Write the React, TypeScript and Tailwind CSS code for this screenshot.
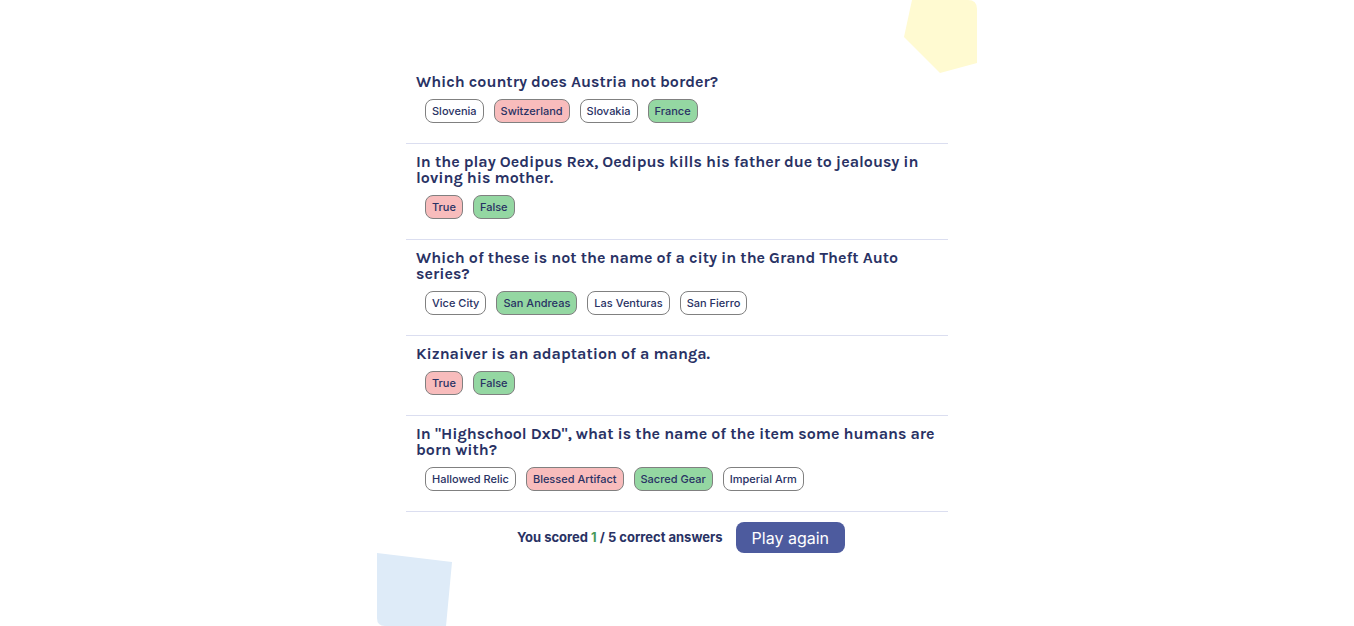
const questions = [
  {
    text: "Which country does Austria not border?",
    answers: ["Slovenia", "Switzerland", "Slovakia", "France"],
    picked: "Switzerland",
    correct: "France",
  },
  {
    text: "In the play Oedipus Rex, Oedipus kills his father due to jealousy in loving his mother.",
    answers: ["True", "False"],
    picked: "True",
    correct: "False",
  },
  {
    text: "Which of these is not the name of a city in the Grand Theft Auto series?",
    answers: ["Vice City", "San Andreas", "Las Venturas", "San Fierro"],
    picked: "San Andreas",
    correct: "San Andreas",
  },
  {
    text: "Kiznaiver is an adaptation of a manga.",
    answers: ["True", "False"],
    picked: "True",
    correct: "False",
  },
  {
    text: 'In "Highschool DxD", what is the name of the item some humans are born with?',
    answers: ["Hallowed Relic", "Blessed Artifact", "Sacred Gear", "Imperial Arm"],
    picked: "Blessed Artifact",
    correct: "Sacred Gear",
  },
];

function answerClass(answer: string, picked: string, correct: string) {
  if (answer === correct) return "bg-[#94d7a2]";
  if (answer === picked) return "bg-[#f8bcbc]";
  return "bg-white";
}

export default function App() {
  return (
    <div className="relative min-h-[626px] overflow-hidden bg-white text-[#293264]">
      <svg className="absolute left-[903px] top-0" width="76" height="75" viewBox="0 0 76 75">
        <path d="M9 0 H65 Q74 0 74 9 V63 L37 73 L1 37 Z" fill="#fffad1" />
      </svg>
      <svg className="absolute left-[377px] top-[553px]" width="76" height="73" viewBox="0 0 76 73">
        <path d="M0 0 L75 9 L69 73 H8 Q0 73 0 65 Z" fill="#deebf8" />
      </svg>

      <main className="relative mx-auto w-[542px] pt-16">
        {questions.map((q) => (
          <section key={q.text} className="border-b border-[#dbdef0] px-[10px] pt-[10px] pb-[20px]">
            <h2 className="text-[16px] font-bold leading-4 font-['Karla','Lato',sans-serif]">{q.text}</h2>
            <div className="mt-[9px] flex gap-[10px] pl-[9px]">
              {q.answers.map((a) => (
                <span
                  key={a}
                  className={`flex h-6 items-center rounded-lg border border-[#808080] px-[6px] text-[11px] font-medium font-['Inter',sans-serif] ${answerClass(a, q.picked, q.correct)}`}
                >
                  {a}
                </span>
              ))}
            </div>
          </section>
        ))}

        <div className="mt-[10px] flex items-center justify-center gap-[13px] pl-2 font-['Inter',sans-serif]">
          <p className="text-[13px] font-bold">
            You scored <span className="text-[#4b9a5a]">1</span> / 5 correct answers
          </p>
          <button className="h-[31px] rounded-lg bg-[#4d5b9e] px-4 text-[16px] text-white">Play again</button>
        </div>
      </main>
    </div>
  );
}
